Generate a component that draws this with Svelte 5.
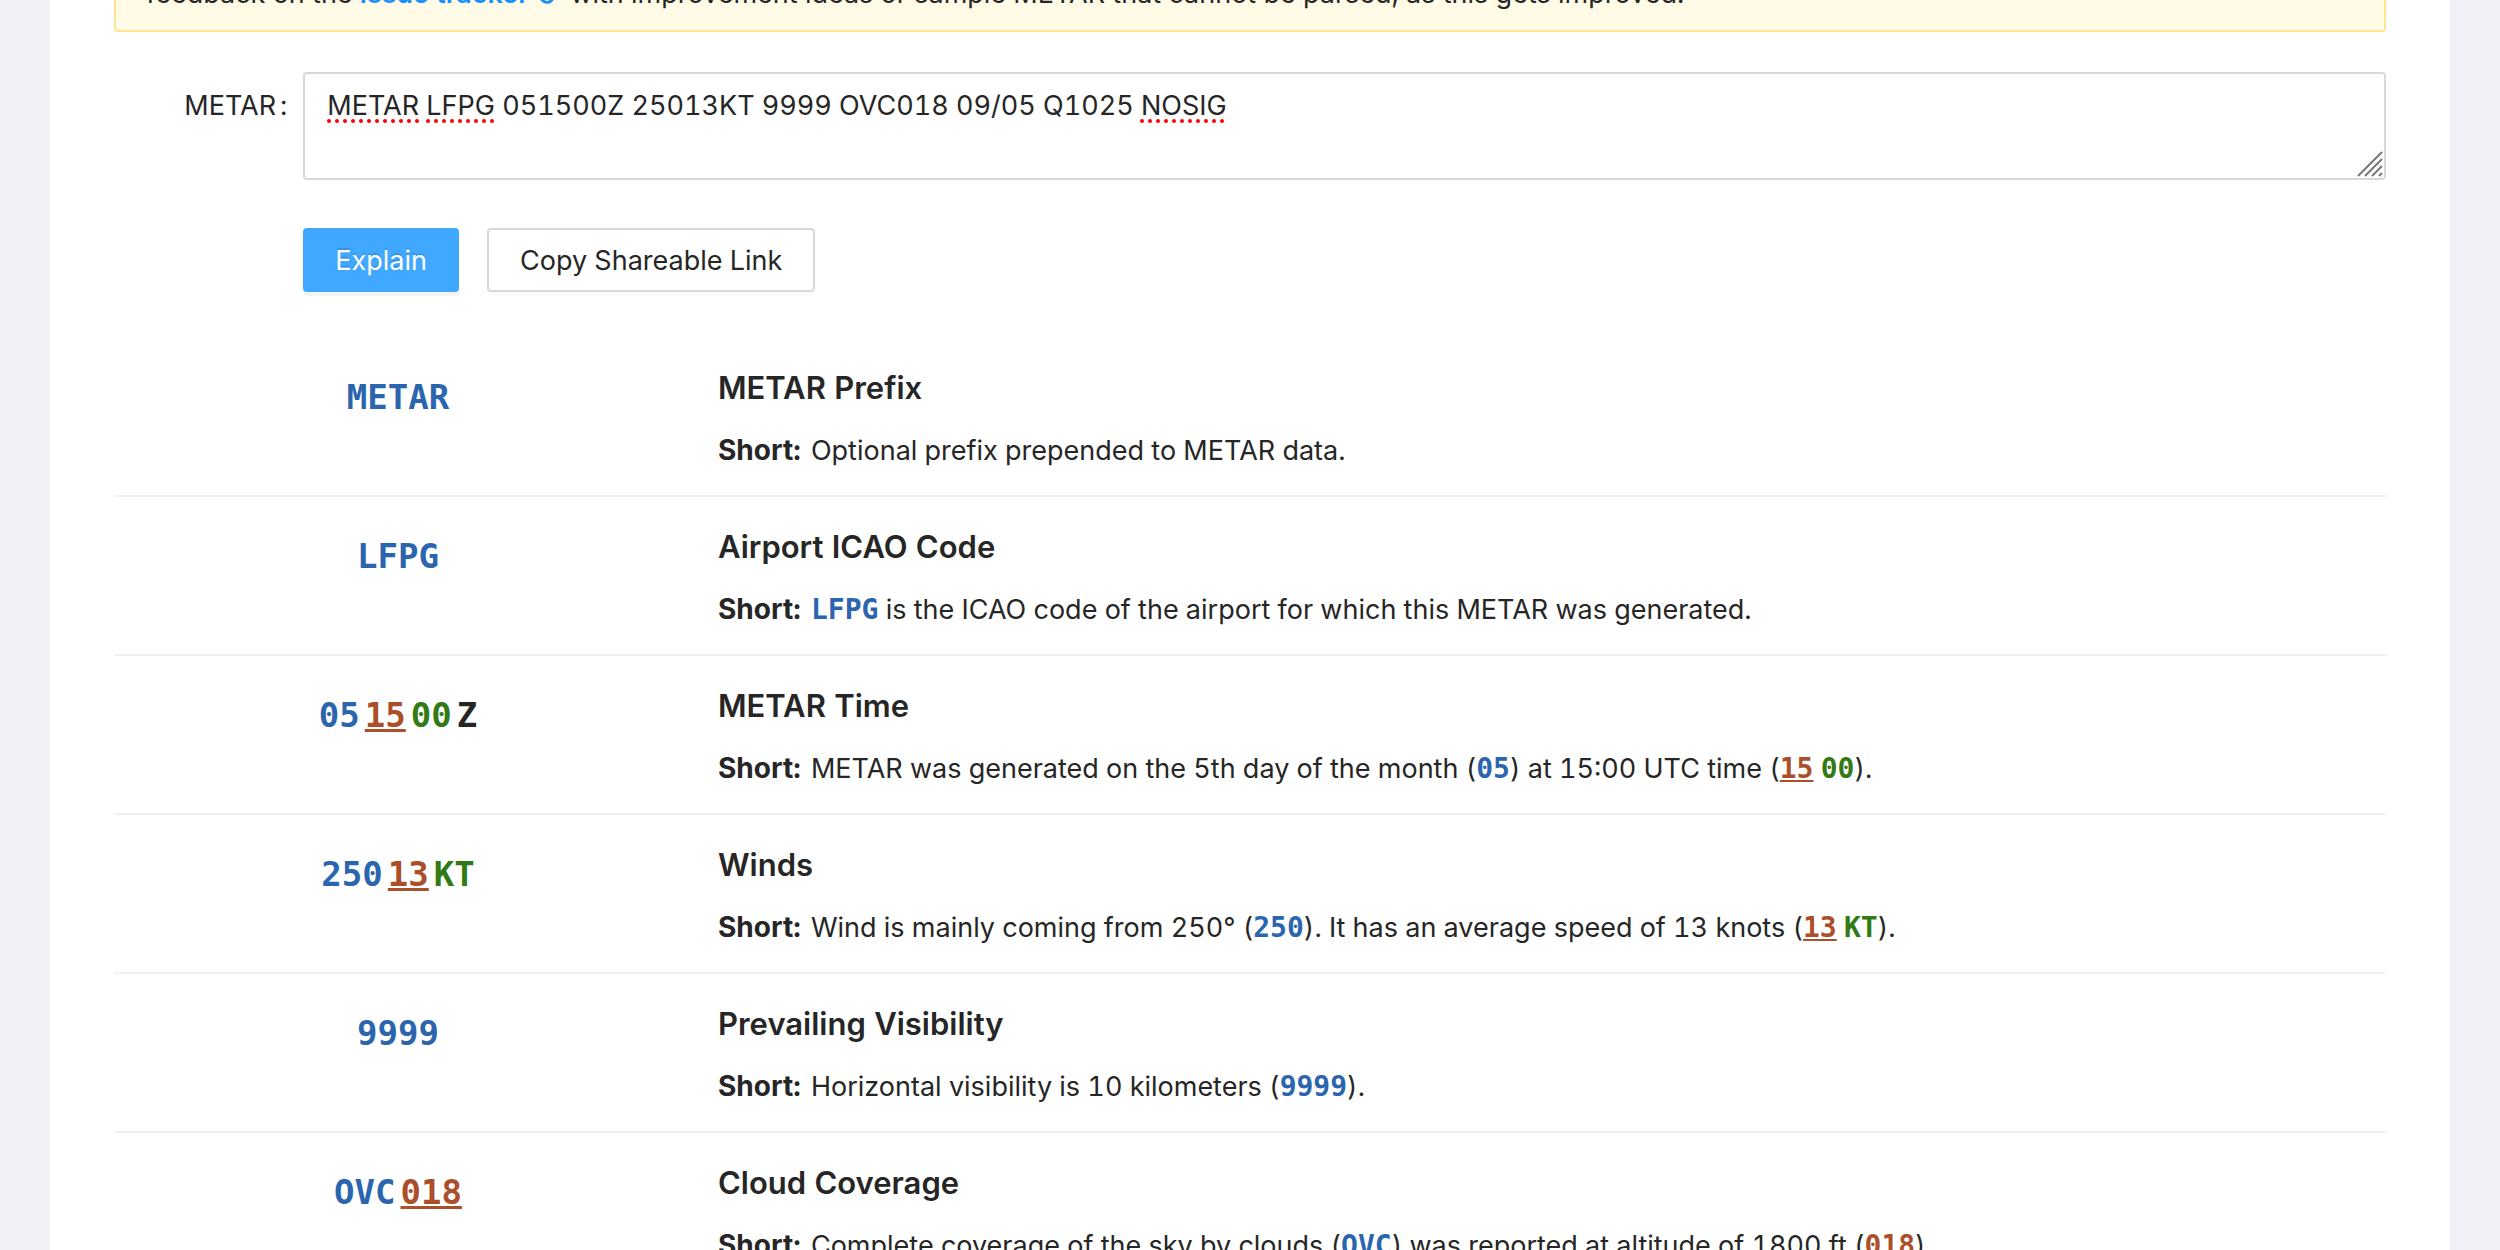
<script>
  let metar = $state('METAR LFPG 051500Z 25013KT 9999 OVC018 09/05 Q1025 NOSIG');

  const rows = [
    {
      code: [['a', 'METAR']],
      title: 'METAR Prefix',
      text: [['', 'Optional prefix prepended to METAR data.']]
    },
    {
      code: [['a', 'LFPG']],
      title: 'Airport ICAO Code',
      text: [['a', 'LFPG'], ['', ' is the ICAO code of the airport for which this METAR was generated.']]
    },
    {
      code: [['a', '05'], ['b', '15'], ['c', '00'], ['d', 'Z']],
      title: 'METAR Time',
      text: [['', 'METAR was generated on the 5th day of the month ('], ['a', '05'], ['', ') at 15:00 UTC time ('], ['b', '15'], ['', ' '], ['c', '00'], ['', ').']]
    },
    {
      code: [['a', '250'], ['b', '13'], ['c', 'KT']],
      title: 'Winds',
      text: [['', 'Wind is mainly coming from 250° ('], ['a', '250'], ['', '). It has an average speed of 13 knots ('], ['b', '13'], ['', ' '], ['c', 'KT'], ['', ').']]
    },
    {
      code: [['a', '9999']],
      title: 'Prevailing Visibility',
      text: [['', 'Horizontal visibility is 10 kilometers ('], ['a', '9999'], ['', ').']]
    },
    {
      code: [['a', 'OVC'], ['b', '018']],
      title: 'Cloud Coverage',
      text: [['', 'Complete coverage of the sky by clouds ('], ['a', 'OVC'], ['', ') was reported at altitude of 1800 ft ('], ['b', '018'], ['', ').']]
    }
  ];
</script>

<div class="page">
  <main class="card">
    <div class="alert" role="note">
      feedback on the <a href="#issues">issue tracker<svg class="link-icon" viewBox="0 0 24 24" aria-hidden="true"><path d="M9 9 L6.5 11.5 A6.5 6.5 0 0 0 16 20 L20 15 M11 8 L14 4 A6 6 0 0 1 22 12" /></svg></a> with improvement ideas or sample METAR that cannot be parsed, as this gets improved.
    </div>

    <form class="form" onsubmit={(e) => e.preventDefault()}>
      <label for="metar">METAR<span class="colon">:</span></label>
      <div class="field">
        <textarea id="metar" spellcheck="false" bind:value={metar}></textarea>
        <svg class="spelling" viewBox="0 0 910 4" aria-hidden="true">
          <path d="M2 2H91M101 2H167M815 2H900" />
        </svg>
        <svg class="grip" viewBox="0 0 26 26" aria-hidden="true">
          <path d="M1 25L25 1M8 25L25 8M15 25L25 15M22 25L25 22" />
        </svg>
      </div>
      <div class="actions">
        <button type="submit" class="primary">Explain</button>
        <button type="button">Copy Shareable Link</button>
      </div>
    </form>

    <ul class="list">
      {#each rows as row}
        <li>
          <div class="code">
            {#each row.code as [kind, value]}<span class={kind}>{value}</span>{/each}
          </div>
          <div class="info">
            <h2>{row.title}</h2>
            <p><strong>Short:</strong>{' '}{#each row.text as [kind, value]}{#if kind}<span class="token {kind}">{value}</span>{:else}{value}{/if}{/each}</p>
          </div>
        </li>
      {/each}
    </ul>
  </main>
</div>

<style>
  :global(body) {
    background: #f0f1f6;
  }

  .page {
    height: 100vh;
    overflow: hidden;
    padding: 0 50px;
    box-sizing: border-box;
    color: #262626;
    font: 27px/44px Inter, 'Liberation Sans', sans-serif;
    font-variant-numeric: tabular-nums;
  }

  .card {
    background: #fff;
    padding: 0 64px;
    margin-top: -48px;
  }

  .alert {
    padding: 18px 30px 14px;
    border: 2px solid #ffe58f;
    border-radius: 4px;
    background: #fffbe6;
  }

  a {
    color: #1890ff;
    font-weight: 600;
    text-decoration: none;
  }

  .link-icon {
    width: 24px;
    height: 24px;
    margin: 0 4px 0 6px;
    fill: none;
    stroke: currentColor;
    stroke-width: 3;
    vertical-align: -2px;
  }

  .form {
    display: grid;
    grid-template-columns: 1fr 11fr;
    row-gap: 48px;
    margin-top: 40px;
  }

  label {
    padding-top: 12px;
    text-align: right;
    white-space: nowrap;
  }

  .colon {
    margin: 0 16px 0 4px;
  }

  .field {
    position: relative;
    display: flex;
  }

  textarea {
    flex: 1;
    height: 108px;
    box-sizing: border-box;
    padding: 10px 22px;
    border: 2px solid #d9d9d9;
    border-radius: 4px;
    background: #fff;
    color: inherit;
    font: inherit;
    font-variant-numeric: inherit;
    resize: none;
    outline: none;
  }

  .spelling {
    position: absolute;
    left: 24px;
    top: 47px;
    width: 910px;
    height: 4px;
    fill: none;
    stroke: #f00;
    stroke-width: 4;
    stroke-linecap: round;
    stroke-dasharray: 0 8;
    pointer-events: none;
  }

  .grip {
    position: absolute;
    right: 3px;
    bottom: 3px;
    width: 26px;
    height: 26px;
    fill: none;
    stroke: #777;
    stroke-width: 2;
    pointer-events: none;
  }

  .actions {
    grid-column: 2;
    display: flex;
    gap: 28px;
  }

  button {
    height: 64px;
    padding: 2px 31px 0;
    border: 2px solid #d9d9d9;
    border-radius: 4px;
    background: #fff;
    box-shadow: 0 4px 0 rgba(0, 0, 0, 0.016);
    color: inherit;
    font: inherit;
    cursor: pointer;
  }

  .primary {
    padding: 2px 30px 0;
    border-color: #40a9ff;
    background: #40a9ff;
    box-shadow: 0 4px 0 rgba(0, 0, 0, 0.043);
    color: #fff;
    text-shadow: 0 -2px 0 rgba(0, 0, 0, 0.12);
  }

  .list {
    margin: 46px 0 0;
    padding: 0;
    list-style: none;
  }

  li {
    display: grid;
    grid-template-columns: 1fr 3fr;
    padding: 26px 0 22px;
    border-bottom: 2px solid #f0f0f0;
  }

  .code {
    display: flex;
    justify-content: center;
    gap: 5px;
    padding-top: 7px;
    font: bold 34px/52px 'DejaVu Sans Mono', monospace;
  }

  .info {
    padding-left: 36px;
  }

  h2 {
    margin: 0 0 17px;
    font-size: 31px;
    line-height: 48px;
    font-weight: 600;
  }

  p {
    margin: 0;
  }

  strong {
    margin-right: 3px;
    font-size: 28px;
    line-height: 28px;
    font-weight: 700;
  }

  .token {
    font: bold 28px/28px 'DejaVu Sans Mono', monospace;
  }

  .a {
    color: #2b65ad;
  }

  .b {
    color: #ab4f2b;
    text-decoration: underline;
  }

  .c {
    color: #327a15;
  }

  .d {
    color: #262626;
  }
</style>
